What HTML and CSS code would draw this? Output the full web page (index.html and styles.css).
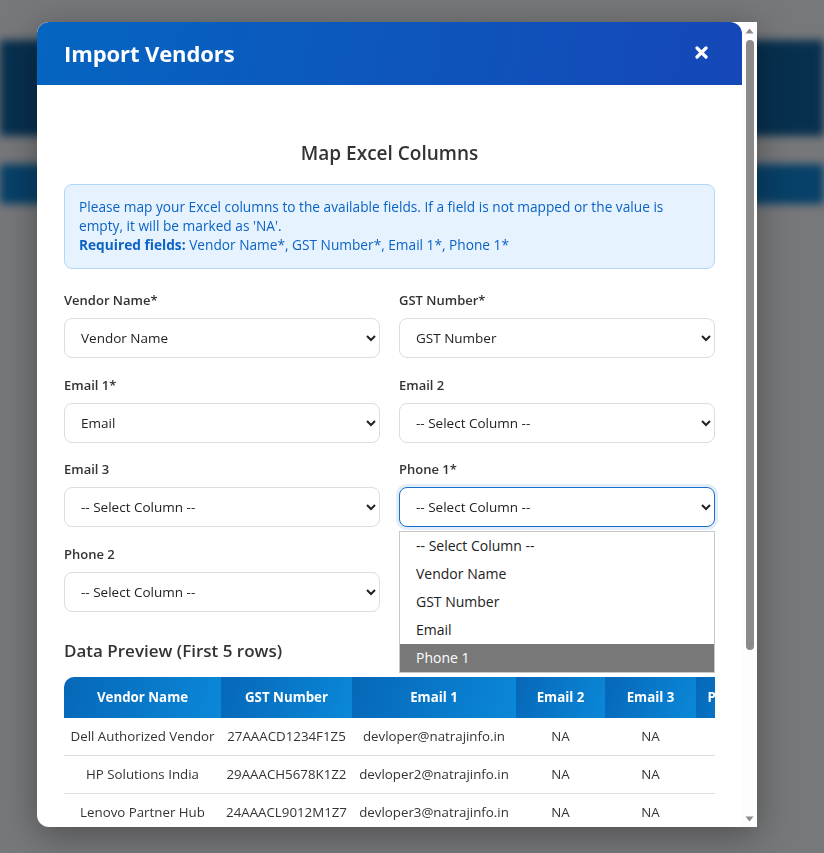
FILE: index.html
```html
<!DOCTYPE html>
<html lang="en">
<head>
    <meta charset="UTF-8">
    <meta name="viewport" content="width=device-width, initial-scale=1.0">
    <title>Import Vendors</title>
    <link rel="stylesheet" href="styles.css">
</head>
<body>
    <!-- pagina de fondo (desenfocada detras del modal) -->
    <div class="page-behind">
        <div class="bg-nav"></div>
        <div class="bg-sub"></div>
    </div>

    <div class="modal">
        <div class="modal-scroll">
            <div class="modal-header">
                <h1>Import Vendors</h1>
                <button type="button" class="close-btn" aria-label="Close">
                    <svg width="13" height="13" viewBox="0 0 13 13">
                        <path d="M2 2 L11 11 M11 2 L2 11" stroke="#fff" stroke-width="3.2" stroke-linecap="round"/>
                    </svg>
                </button>
            </div>
            <div class="modal-body">
                <h2>Map Excel Columns</h2>
                <div class="info-box">
                    Please map your Excel columns to the available fields. If a field is not mapped or the value is empty, it will be marked as 'NA'.<br>
                    <strong>Required fields:</strong> Vendor Name*, GST Number*, Email 1*, Phone 1*
                </div>

                <div class="map-grid">
                    <div class="form-group">
                        <label for="vendor">Vendor Name*</label>
                        <select id="vendor">
                            <option>-- Select Column --</option>
                            <option selected>Vendor Name</option>
                            <option>GST Number</option>
                            <option>Email</option>
                            <option>Phone 1</option>
                        </select>
                    </div>
                    <div class="form-group">
                        <label for="gst">GST Number*</label>
                        <select id="gst">
                            <option>-- Select Column --</option>
                            <option>Vendor Name</option>
                            <option selected>GST Number</option>
                            <option>Email</option>
                            <option>Phone 1</option>
                        </select>
                    </div>
                    <div class="form-group">
                        <label for="email1">Email 1*</label>
                        <select id="email1">
                            <option>-- Select Column --</option>
                            <option>Vendor Name</option>
                            <option>GST Number</option>
                            <option selected>Email</option>
                            <option>Phone 1</option>
                        </select>
                    </div>
                    <div class="form-group">
                        <label for="email2">Email 2</label>
                        <select id="email2">
                            <option selected>-- Select Column --</option>
                            <option>Vendor Name</option>
                            <option>GST Number</option>
                            <option>Email</option>
                            <option>Phone 1</option>
                        </select>
                    </div>
                    <div class="form-group">
                        <label for="email3">Email 3</label>
                        <select id="email3">
                            <option selected>-- Select Column --</option>
                            <option>Vendor Name</option>
                            <option>GST Number</option>
                            <option>Email</option>
                            <option>Phone 1</option>
                        </select>
                    </div>
                    <div class="form-group">
                        <label for="phone1">Phone 1*</label>
                        <select id="phone1" class="focused">
                            <option selected>-- Select Column --</option>
                            <option>Vendor Name</option>
                            <option>GST Number</option>
                            <option>Email</option>
                            <option>Phone 1</option>
                        </select>
                        <!-- lista abierta del select -->
                        <ul class="dropdown-list">
                            <li>-- Select Column --</li>
                            <li>Vendor Name</li>
                            <li>GST Number</li>
                            <li>Email</li>
                            <li class="hover">Phone 1</li>
                        </ul>
                    </div>
                    <div class="form-group">
                        <label for="phone2">Phone 2</label>
                        <select id="phone2">
                            <option selected>-- Select Column --</option>
                            <option>Vendor Name</option>
                            <option>GST Number</option>
                            <option>Email</option>
                            <option>Phone 1</option>
                        </select>
                    </div>
                </div>

                <h3>Data Preview (First 5 rows)</h3>
                <div class="table-wrap">
                    <table class="preview">
                        <colgroup>
                            <col class="c-name">
                            <col class="c-gst">
                            <col class="c-email">
                            <col class="c-small">
                            <col class="c-small2">
                            <col class="c-phone">
                            <col class="c-phone">
                        </colgroup>
                        <thead>
                            <tr>
                                <th>Vendor Name</th>
                                <th>GST Number</th>
                                <th>Email 1</th>
                                <th>Email 2</th>
                                <th>Email 3</th>
                                <th>Phone 1</th>
                                <th>Phone 2</th>
                            </tr>
                        </thead>
                        <tbody>
                            <tr>
                                <td>Dell Authorized Vendor</td>
                                <td>27AAACD1234F1Z5</td>
                                <td>devloper@natrajinfo.in</td>
                                <td>NA</td>
                                <td>NA</td>
                                <td>NA</td>
                                <td>NA</td>
                            </tr>
                            <tr>
                                <td>HP Solutions India</td>
                                <td>29AAACH5678K1Z2</td>
                                <td>devloper2@natrajinfo.in</td>
                                <td>NA</td>
                                <td>NA</td>
                                <td>NA</td>
                                <td>NA</td>
                            </tr>
                            <tr>
                                <td>Lenovo Partner Hub</td>
                                <td>24AAACL9012M1Z7</td>
                                <td>devloper3@natrajinfo.in</td>
                                <td>NA</td>
                                <td>NA</td>
                                <td>NA</td>
                                <td>NA</td>
                            </tr>
                        </tbody>
                    </table>
                </div>
            </div>
        </div>

        <!-- barra de desplazamiento -->
        <div class="scrollbar">
            <div class="sb-arrow">
                <svg width="9" height="6" viewBox="0 0 9 6"><polygon points="4.5,0.5 8.5,5.5 0.5,5.5" fill="#8c8c8c"/></svg>
            </div>
            <div class="sb-track">
                <div class="sb-thumb"></div>
            </div>
            <div class="sb-arrow">
                <svg width="9" height="6" viewBox="0 0 9 6"><polygon points="0.5,0.5 8.5,0.5 4.5,5.5" fill="#8c8c8c"/></svg>
            </div>
        </div>
    </div>
</body>
</html>
```
FILE: styles.css
```css
body {
    margin: 0;
    height: 853px;
    overflow: hidden;
    background-color: #77787a;
    font-family: "Open Sans", Arial, sans-serif;
    color: #333;
}
.page-behind {
    filter: blur(4px);
    padding-top: 40px;
}
.bg-nav {
    height: 96px;
    background-color: #07304f;
}
.bg-sub {
    height: 40px;
    margin-top: 28px;
    background-color: #074068;
}
.modal {
    position: fixed;
    top: 22px;
    left: 37px;
    width: 720px;
    height: 805px;
    display: flex;
    background-color: #fff;
    border-radius: 12px 0 0 12px;
    overflow: hidden;
    box-shadow: 0 8px 36px rgba(0, 0, 0, 0.35);
}
.modal-scroll {
    flex: 1;
    min-width: 0;
    overflow: hidden;
}
.scrollbar {
    width: 15px;
    display: flex;
    flex-direction: column;
    background-color: #fdfdfd;
}
.sb-arrow {
    height: 17px;
    display: flex;
    justify-content: center;
    align-items: center;
}
.sb-track {
    flex: 1;
    display: flex;
    justify-content: center;
    padding-top: 1px;
}
.sb-thumb {
    width: 8px;
    height: 610px;
    border-radius: 4px;
    background-color: #8a8a8a;
}
.modal-header {
    display: flex;
    justify-content: space-between;
    align-items: center;
    height: 61px;
    padding: 0 34px 2px 27px;
    background: linear-gradient(100deg, #0565c1, #1547b7);
    border-radius: 12px 12px 0 0;
}
.modal-header h1 {
    margin: 0;
    color: #fff;
    font-size: 22px;
    font-weight: 700;
    letter-spacing: -0.1px;
}
.close-btn {
    background: none;
    border: none;
    padding: 0;
    cursor: pointer;
    display: flex;
}
.modal-body {
    padding: 27px 27px 30px;
}
h2 {
    margin: 28px 0 17px;
    text-align: center;
    font-size: 19px;
    font-weight: 600;
    line-height: 27px;
    color: #333;
}
.info-box {
    background-color: #e6f2fd;
    border: 1px solid #b3d7fb;
    border-radius: 8px;
    padding: 12px 14px 14px;
    color: #0b63c6;
    font-size: 13.7px;
    line-height: 19px;
}
.info-box strong {
    font-weight: 700;
}
.map-grid {
    display: grid;
    grid-template-columns: 1fr 1fr;
    column-gap: 19px;
    row-gap: 17.5px;
    margin-top: 22px;
}
.form-group {
    position: relative;
    display: flex;
    flex-direction: column;
}
.form-group label {
    font-size: 13px;
    font-weight: 600;
    line-height: 19px;
    margin-bottom: 8px;
    color: #333;
}
.form-group select {
    height: 40px;
    padding: 0 8px 0 12px;
    border: 1px solid #dcdde2;
    border-radius: 8px;
    background-color: #fff;
    font-family: inherit;
    font-size: 13.5px;
    color: #222;
}
.form-group select.focused {
    border-color: #1a6ecb;
    box-shadow: 0 0 0 3px rgba(26, 110, 203, 0.12);
}
.dropdown-list {
    position: absolute;
    top: 71px;
    left: 0;
    right: 0;
    margin: 0;
    padding: 0;
    list-style: none;
    background-color: #fff;
    border: 1px solid #c8c8c8;
    z-index: 10;
}
.dropdown-list li {
    height: 28px;
    line-height: 28px;
    padding-left: 16px;
    font-size: 14px;
    color: #222;
}
.dropdown-list li.hover {
    background-color: #787878;
    color: #fff;
}
h3 {
    margin: 27px 0 14px;
    font-size: 17px;
    font-weight: 600;
    line-height: 24px;
    color: #333;
}
.table-wrap {
    overflow: hidden;
    border-radius: 10px 0 0 0;
}
.preview {
    border-collapse: collapse;
    table-layout: fixed;
    width: 784px;
    font-size: 13.3px;
}
.preview .c-name { width: 157px; }
.preview .c-gst { width: 131px; }
.preview .c-email { width: 164px; }
.preview .c-small { width: 89px; }
.preview .c-small2 { width: 91px; }
.preview .c-phone { width: 76px; }
.preview th {
    height: 41px;
    padding: 0 4px;
    background: linear-gradient(110deg, #0667b8, #0b88d8);
    color: #fff;
    font-weight: 700;
    text-align: center;
    white-space: nowrap;
}
.preview td {
    height: 37px;
    padding: 0 4px;
    text-align: center;
    color: #333;
    border-bottom: 1px solid #dedfe3;
    white-space: nowrap;
}
```
